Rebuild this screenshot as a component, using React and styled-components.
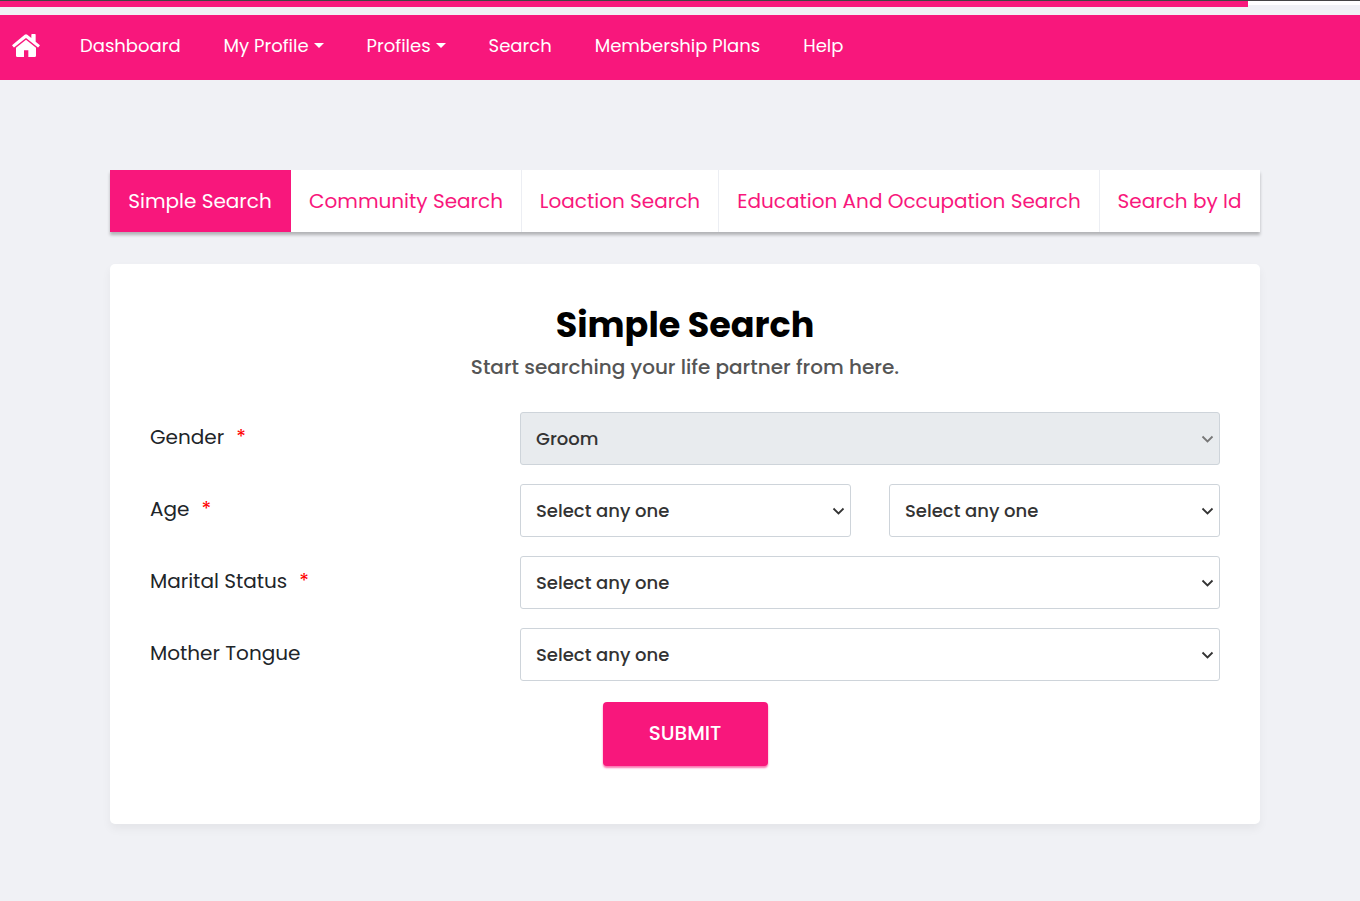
import React from "react";
import styled, { createGlobalStyle } from "styled-components";

const PINK = "#f8177c";

const GlobalStyle = createGlobalStyle`
  *, *::before, *::after { box-sizing: border-box; }
  body {
    margin: 0;
    background: #f0f1f5;
    color: #212529;
    font-family: Poppins, Inter, sans-serif;
    font-size: 20px;
    line-height: 30px;
  }
`;

const TopStrip = styled.div`
  height: 15px;
  border-top: 1px solid #444;
`;

const ProgressTrack = styled.div`
  height: 4px;
  background: #fff;
`;

const ProgressBar = styled.div`
  height: 6px;
  background: ${PINK};
`;

const NavBar = styled.nav`
  display: flex;
  align-items: center;
  gap: 43px;
  min-height: 65px;
  padding: 0 12px 4px;
  background: ${PINK};
`;

const HomeLink = styled.a`
  display: flex;
  margin-right: -3px;
  color: #fff;
`;

const NavLink = styled.a`
  display: flex;
  align-items: center;
  gap: 5px;
  color: #fff;
  font-size: 18px;
  text-decoration: none;
  white-space: nowrap;
`;

const Caret = styled.span`
  border: 5px solid transparent;
  border-top-color: #fff;
  border-bottom: 0;
`;

const Content = styled.main`
  max-width: 1180px;
  margin: 0 auto;
  padding: 90px 10px 76px 20px;
`;

const Tabs = styled.div`
  display: grid;
  grid-template-columns: 181fr 231fr 197fr 381fr 160fr;
  background: #fff;
  box-shadow: 0 3px 3px rgba(0, 0, 0, 0.26);
`;

const Tab = styled.button`
  height: 62px;
  padding: 0;
  border: 0;
  border-right: 1px solid ${(p) => (p.$active ? PINK : "#eceef3")};
  background: ${(p) => (p.$active ? PINK : "#fff")};
  color: ${(p) => (p.$active ? "#fff" : PINK)};
  font: inherit;
  white-space: nowrap;

  &:last-child { border-right-color: #fff; }
`;

const Card = styled.section`
  margin-top: 32px;
  padding: 40px 40px 58px;
  border-radius: 5px;
  background: #fff;
  box-shadow: 0 5px 10px rgba(0, 0, 0, 0.05);
`;

const Title = styled.h1`
  margin: 0;
  color: #000;
  font-size: 35px;
  font-weight: 700;
  line-height: 42px;
  text-align: center;
`;

const Subtitle = styled.p`
  margin: 6px 0 30px;
  color: #555;
  font-weight: 500;
  text-align: center;
`;

const Form = styled.form`
  display: flex;
  flex-direction: column;
  gap: 19px;
`;

const Row = styled.div`
  display: grid;
  grid-template-columns: 370fr 700fr;
  align-items: center;
`;

const Label = styled.label`
  padding-bottom: 3px;
`;

const Required = styled.span`
  margin-left: 12px;
  color: red;
`;

const Fields = styled.div`
  display: flex;
  gap: 38px;
`;

const SelectBox = styled.div`
  position: relative;
  flex: 1;
  min-width: 0;
`;

const SelectControl = styled.select`
  display: block;
  width: 100%;
  height: 53px;
  padding: 0 24px 0 15px;
  border: 1px solid #ced4da;
  border-radius: 3px;
  appearance: none;
  background: #fff;
  color: #333;
  font: inherit;
  font-size: 18px;
  font-weight: 500;

  &:disabled {
    background: #e8ebee;
    color: #333;
    opacity: 1;
  }
`;

const Chevron = styled.svg`
  position: absolute;
  top: 0;
  bottom: 0;
  right: 6px;
  margin: auto 0;
  width: 13px;
  height: 8px;
  fill: none;
  stroke: ${(p) => (p.$muted ? "#777" : "#333")};
  stroke-width: 1.8;
  pointer-events: none;
`;

const Submit = styled.button`
  align-self: center;
  width: 165px;
  height: 64px;
  margin-top: 2px;
  padding: 0 0 2px;
  border: 0;
  border-radius: 4px;
  background: ${PINK};
  box-shadow: 0 2px 2px rgba(248, 23, 124, 0.6);
  color: #fff;
  font: inherit;
  font-weight: 500;
`;

const NAV = [
  { text: "Dashboard" },
  { text: "My Profile", menu: true },
  { text: "Profiles", menu: true },
  { text: "Search" },
  { text: "Membership Plans" },
  { text: "Help" },
];

const TABS = [
  "Simple Search",
  "Community Search",
  "Loaction Search",
  "Education And Occupation Search",
  "Search by Id",
];

function HomeIcon() {
  return (
    <svg width="28" height="23" viewBox="0 0 84 69" fill="currentColor" aria-hidden="true">
      <path d="M38 2Q42-1 46 2L58 12V2Q58 0 60 0H69Q71 0 71 2V23L83 33Q84 34 83 35L79 40Q78 41 77 40L42 12 7 40Q6 41 5 40L1 35Q0 34 1 33Z" />
      <path d="M42 17 72 41V65Q72 69 68 69H49V49H36V69H16Q12 69 12 65V41Z" />
    </svg>
  );
}

function Select({ option = "Select any one", ...rest }) {
  return (
    <SelectBox>
      <SelectControl {...rest}>
        <option>{option}</option>
      </SelectControl>
      <Chevron viewBox="0 0 13 8" aria-hidden="true" $muted={rest.disabled}>
        <path d="M1.5 1.5 6.5 6.5 11.5 1.5" />
      </Chevron>
    </SelectBox>
  );
}

function FormRow({ id, label, required, children }) {
  return (
    <Row>
      <Label htmlFor={id}>
        {label}
        {required && <Required>*</Required>}
      </Label>
      <Fields>{children}</Fields>
    </Row>
  );
}

export default function App() {
  return (
    <>
      <GlobalStyle />
      <TopStrip>
        <ProgressTrack>
          <ProgressBar style={{ width: "91.8%" }} />
        </ProgressTrack>
      </TopStrip>
      <NavBar>
        <HomeLink href="#" aria-label="Home"><HomeIcon /></HomeLink>
        {NAV.map((n) => (
          <NavLink href="#" key={n.text}>
            {n.text}
            {n.menu && <Caret />}
          </NavLink>
        ))}
      </NavBar>
      <Content>
        <Tabs role="tablist">
          {TABS.map((t, i) => (
            <Tab key={t} type="button" role="tab" aria-selected={i === 0} $active={i === 0}>{t}</Tab>
          ))}
        </Tabs>
        <Card>
          <Title>Simple Search</Title>
          <Subtitle>Start searching your life partner from here.</Subtitle>
          <Form onSubmit={(e) => e.preventDefault()}>
            <FormRow id="gender" label="Gender" required>
              <Select id="gender" option="Groom" disabled />
            </FormRow>
            <FormRow id="age-from" label="Age" required>
              <Select id="age-from" />
              <Select id="age-to" aria-label="Age to" />
            </FormRow>
            <FormRow id="marital" label="Marital Status" required>
              <Select id="marital" />
            </FormRow>
            <FormRow id="tongue" label="Mother Tongue">
              <Select id="tongue" />
            </FormRow>
            <Submit type="submit">SUBMIT</Submit>
          </Form>
        </Card>
      </Content>
    </>
  );
}
